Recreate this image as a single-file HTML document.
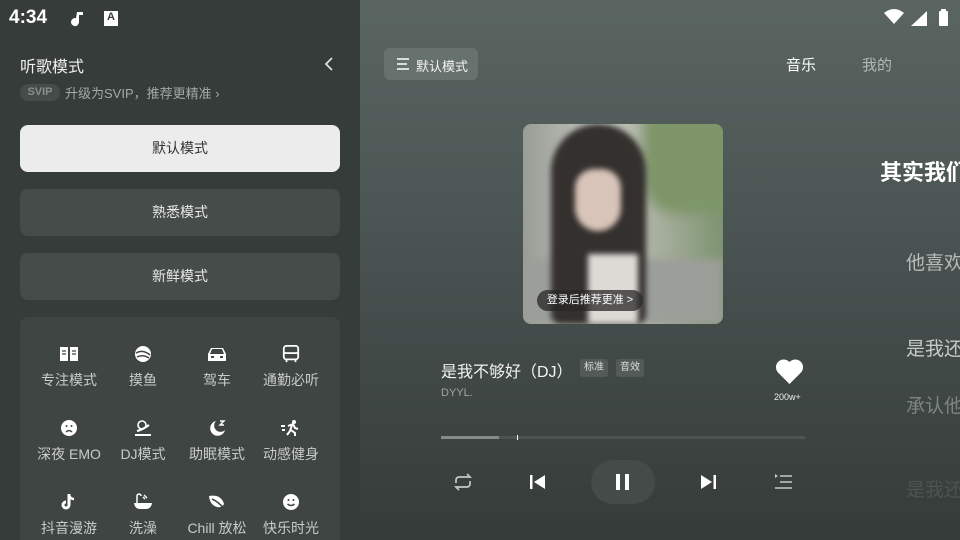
<!DOCTYPE html>
<html style="width:960px;height:540px;overflow:hidden"><head><meta charset="utf-8"><style>
*{margin:0;padding:0;box-sizing:border-box}
body{width:960px;height:540px;overflow:hidden;position:relative;font-family:"Liberation Sans","Noto Sans CJK SC",sans-serif;background:#363c3a}
.abs{position:absolute}
#left{left:0;top:0;width:360px;height:540px;background:#363c3a;overflow:hidden}
#right{left:360px;top:0;width:600px;height:540px;background:linear-gradient(#5a6562,#4b5553 40%,#353b39 100%)}
.btn{position:absolute;left:20px;width:320px;height:47px;border-radius:8px;background:#464c4a;color:#e8e8e8;font-size:14px;text-align:center;line-height:47px}
.cell{position:absolute;width:74px;text-align:center;color:#c8cbca;font-size:14px}
.cell svg{display:block;margin:0 auto 7px}
.lyr{position:absolute;left:546px;font-size:19px;white-space:nowrap}
</style></head><body>
<div id="left" class="abs">
 <div class="abs" style="left:9px;top:7px;color:#fff;font-size:19px;font-weight:bold">4:34</div>
 <svg class="abs" style="left:70px;top:10px" width="16" height="18" viewBox="0 0 16 18"><path d="M7 2h6v3H9v7a4 4 0 1 1-3-3.8z" fill="#fff"/></svg>
 <div class="abs" style="left:104px;top:11px;width:14px;height:15px;background:#fff;color:#363c3a;font-size:11px;font-weight:bold;text-align:center;line-height:13px">A</div>
 <div class="abs" style="left:20px;top:53px;color:#f0f0f0;font-size:16px">听歌模式</div>
 <svg class="abs" style="left:324px;top:57px" width="10" height="14" viewBox="0 0 10 14"><path d="M8 1L2 7l6 6" stroke="#ddd" stroke-width="1.8" fill="none"/></svg>
 <div class="abs" style="left:20px;top:84px;width:40px;height:17px;border-radius:8px;background:#464c4a;color:#8a8f8d;font-size:11px;font-weight:bold;text-align:center;line-height:17px">SVIP</div>
 <div class="abs" style="left:65px;top:83px;color:#a4a8a7;font-size:13px">升级为SVIP，推荐更精准 ›</div>
 <div class="btn" style="top:125px;background:#ececec;color:#333">默认模式</div>
 <div class="btn" style="top:189px">熟悉模式</div>
 <div class="btn" style="top:253px">新鲜模式</div>
 <div class="abs" style="left:20px;top:317px;width:320px;height:240px;border-radius:8px;background:#3f4543"></div>
 <div class="cell" style="left:32px;top:345px"><svg width="20" height="18" viewBox="0 0 20 18"><path d="M1 2h8v14H1zM11 2h8v14h-8z" fill="#fff"/><path d="M3 6h4M3 9h4M13 6h4M13 9h4" stroke="#3f4543" stroke-width="1.3"/></svg>专注模式</div>
 <div class="cell" style="left:106px;top:345px"><svg width="20" height="18" viewBox="0 0 20 18"><circle cx="10" cy="9" r="8" fill="#fff"/><path d="M3 8q7-4 14 2M4 12q6-3 12 1" stroke="#3f4543" stroke-width="1.5" fill="none"/></svg>摸鱼</div>
 <div class="cell" style="left:180px;top:345px"><svg width="22" height="18" viewBox="0 0 22 18"><path d="M2 9l3-6h12l3 6v7H2z" fill="#fff"/><path d="M6 4l-2 5h14l-2-5z" fill="#3f4543"/><rect x="5" y="11" width="3" height="2" fill="#3f4543"/><rect x="14" y="11" width="3" height="2" fill="#3f4543"/></svg>驾车</div>
 <div class="cell" style="left:254px;top:345px"><svg width="20" height="18" viewBox="0 0 20 20"><rect x="2" y="1" width="16" height="15" rx="3" fill="none" stroke="#fff" stroke-width="2"/><path d="M2 9h16" stroke="#fff" stroke-width="2"/><path d="M5 16v3M15 16v3" stroke="#fff" stroke-width="2"/></svg>通勤必听</div>
 <div class="cell" style="left:32px;top:419px"><svg width="20" height="18" viewBox="0 0 20 18"><circle cx="10" cy="9" r="8" fill="#fff"/><circle cx="7.5" cy="7" r="1" fill="#3f4543"/><circle cx="12.5" cy="7" r="1" fill="#3f4543"/><path d="M7 13q3-3 6 0" stroke="#3f4543" stroke-width="1.5" fill="none"/></svg>深夜 EMO</div>
 <div class="cell" style="left:106px;top:419px"><svg width="20" height="18" viewBox="0 0 20 18"><circle cx="9" cy="6" r="4" fill="none" stroke="#fff" stroke-width="1.6"/><path d="M4 12q5-1 12-6M2 16h16" stroke="#fff" stroke-width="2" fill="none"/></svg>DJ模式</div>
 <div class="cell" style="left:180px;top:419px"><svg width="20" height="18" viewBox="0 0 20 18"><path d="M9 2a7.5 7.5 0 1 0 9 9a6 6 0 0 1-9-9z" fill="#fff"/><path d="M13 2h4l-4 4h4" stroke="#fff" stroke-width="1.4" fill="none"/></svg>助眠模式</div>
 <div class="cell" style="left:254px;top:419px"><svg width="22" height="18" viewBox="0 0 22 18"><circle cx="14" cy="3" r="2" fill="#fff"/><path d="M8 7l5-2 2 4 3 1M12 6l-2 6-3 4M11 11l4 3v3M1 7h4M2 11h3" stroke="#fff" stroke-width="2" fill="none"/></svg>动感健身</div>
 <div class="cell" style="left:32px;top:493px"><svg width="18" height="18" viewBox="0 0 18 18"><path d="M9 1v11a3 3 0 1 1-3-3" stroke="#fff" stroke-width="3" fill="none"/><path d="M9 2q1 4 5 4" stroke="#fff" stroke-width="2.5" fill="none"/></svg>抖音漫游</div>
 <div class="cell" style="left:106px;top:493px"><svg width="20" height="18" viewBox="0 0 20 18"><path d="M1 10h18q-1 6-6 6H7q-5 0-6-6z" fill="#fff"/><path d="M4 10V3a2 2 0 0 1 4 0" stroke="#fff" stroke-width="1.5" fill="none"/><path d="M10 4l2 2M11 2l3 3" stroke="#fff" stroke-width="1.4"/></svg>洗澡</div>
 <div class="cell" style="left:180px;top:493px"><svg width="20" height="18" viewBox="0 0 20 18"><path d="M2 3q12-2 15 8q-2 4-7 3Q3 12 2 3z" fill="#fff"/><path d="M5 6q7 3 13 11" stroke="#3f4543" stroke-width="1.5" fill="none"/></svg>Chill 放松</div>
 <div class="cell" style="left:254px;top:493px"><svg width="20" height="18" viewBox="0 0 20 18"><circle cx="10" cy="9" r="8" fill="#fff"/><circle cx="7.5" cy="7" r="1" fill="#3f4543"/><circle cx="12.5" cy="7" r="1" fill="#3f4543"/><path d="M6.5 11q3.5 3 7 0" stroke="#3f4543" stroke-width="1.5" fill="none"/></svg>快乐时光</div>
</div>
<div id="right" class="abs"></div>
<svg class="abs" style="left:884px;top:8px" width="70" height="20" viewBox="0 0 70 20"><path d="M0 5q10-8 20 0l-10 11z" fill="#fff"/><path d="M27 18l16-15v15z" fill="#fff"/><rect x="55" y="3" width="9" height="15" rx="1" fill="#fff"/><rect x="57" y="1" width="5" height="2" fill="#fff"/></svg>
<div class="abs" style="left:384px;top:48px;width:94px;height:32px;border-radius:6px;background:#67716e"></div>
<svg class="abs" style="left:396px;top:57px" width="14" height="14" viewBox="0 0 14 14"><path d="M1 2h12M1 7h10M1 12h12" stroke="#fff" stroke-width="1.6"/></svg>
<div class="abs" style="left:416px;top:56px;color:#f4f4f4;font-size:13px">默认模式</div>
<div class="abs" style="left:786px;top:54px;color:#fff;font-size:15px">音乐</div>
<div class="abs" style="left:862px;top:54px;color:#b2b8b6;font-size:15px">我的</div>
<div class="abs" style="left:523px;top:124px;width:200px;height:200px;border-radius:8px;overflow:hidden;background:linear-gradient(90deg,#9a9c96 0%,#c5c7c1 40%,#a6ad9c 70%,#7d9470 100%)">
 <div class="abs" style="left:0;top:135px;width:200px;height:65px;background:#9c9e99;filter:blur(4px)"></div>
 <div class="abs" style="left:120px;top:-10px;width:90px;height:100px;background:#7d9569;border-radius:0 0 0 35px;filter:blur(6px)"></div>
 <div class="abs" style="left:28px;top:0;width:95px;height:200px;background:#34302e;border-radius:50px 50px 10px 10px;filter:blur(3px)"></div>
 <div class="abs" style="left:52px;top:45px;width:46px;height:62px;background:#d8c4b9;border-radius:23px 23px 28px 28px;filter:blur(3px)"></div>
 <div class="abs" style="left:65px;top:130px;width:50px;height:70px;background:#dddad6;filter:blur(3px)"></div>
 <div class="abs" style="left:14px;top:166px;width:106px;height:21px;border-radius:11px;background:rgba(40,40,40,.75);color:#fff;font-size:11px;text-align:center;line-height:21px">登录后推荐更准 &gt;</div>
</div>
<div class="abs" style="left:441px;top:358px;color:#f2f2f2;font-size:16px">是我不够好（DJ）</div>
<div class="abs" style="left:580px;top:359px;width:28px;height:18px;border-radius:3px;background:#535a58;color:#ddd;font-size:10px;text-align:center;line-height:18px">标准</div>
<div class="abs" style="left:616px;top:359px;width:28px;height:18px;border-radius:3px;background:#535a58;color:#ddd;font-size:10px;text-align:center;line-height:18px">音效</div>
<div class="abs" style="left:441px;top:387px;color:#a0a5a3;font-size:11px">DYYL.</div>
<svg class="abs" style="left:775px;top:358px" width="29" height="27" viewBox="0 0 29 27"><path d="M14.5 26L3 14.5A7 7 0 0 1 14.5 4A7 7 0 0 1 26 14.5z" fill="#fff"/></svg>
<div class="abs" style="left:774px;top:392px;color:#eee;font-size:9px">200w+</div>
<div class="abs" style="left:441px;top:436px;width:364px;height:3px;background:#4d5452"></div>
<div class="abs" style="left:441px;top:436px;width:58px;height:3px;background:#858b89"></div>
<div class="abs" style="left:517px;top:435px;width:1px;height:5px;background:#fff"></div>
<svg class="abs" style="left:453px;top:473px" width="20" height="18" viewBox="0 0 20 18"><path d="M3 10V7a3 3 0 0 1 3-3h11l-3-3M17 8v3a3 3 0 0 1-3 3H3l3 3" stroke="#c5c9c8" stroke-width="1.7" fill="none"/></svg>
<svg class="abs" style="left:529px;top:474px" width="18" height="16" viewBox="0 0 18 16"><rect x="1" y="1" width="2.5" height="14" fill="#fff"/><path d="M16 1v14L5 8z" fill="#fff"/></svg>
<div class="abs" style="left:591px;top:460px;width:64px;height:44px;border-radius:22px;background:#444b49"></div>
<svg class="abs" style="left:615px;top:473px" width="16" height="18" viewBox="0 0 16 18"><rect x="1" y="1" width="4" height="16" fill="#fff"/><rect x="10" y="1" width="4" height="16" fill="#fff"/></svg>
<svg class="abs" style="left:699px;top:474px" width="18" height="16" viewBox="0 0 18 16"><path d="M2 1v14l11-7z" fill="#fff"/><rect x="14.5" y="1" width="2.5" height="14" fill="#fff"/></svg>
<svg class="abs" style="left:774px;top:474px" width="18" height="16" viewBox="0 0 18 16"><path d="M6 2h12M6 8h12M1 14h17" stroke="#c5c9c8" stroke-width="1.5"/><path d="M1 0l3 2-3 2z" fill="#c5c9c8"/></svg>
<div class="lyr" style="left:880px;top:155px;color:#fff;font-size:22px;font-weight:bold">其实我们</div>
<div class="lyr" style="left:906px;top:248px;color:#b7bcba">他喜欢</div>
<div class="lyr" style="left:906px;top:334px;color:#c5c9c8">是我还</div>
<div class="lyr" style="left:906px;top:391px;color:#7e8583">承认他</div>
<div class="lyr" style="left:906px;top:475px;color:#4c5351">是我还</div>
</body></html>
